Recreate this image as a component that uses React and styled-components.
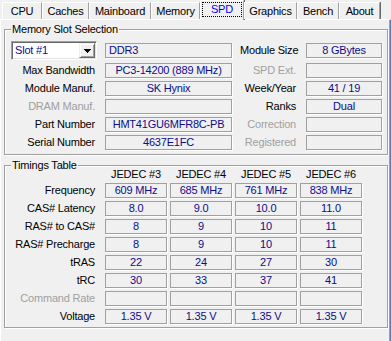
import React from 'react';
import styled, { createGlobalStyle } from 'styled-components';

const Global = createGlobalStyle`
  html, body { margin: 0; padding: 0; background: #f0f0f0; }
  body {
    font-family: "Liberation Sans", Arial, sans-serif;
    font-size: 11px;
    letter-spacing: -0.2px;
    color: #000;
    overflow: hidden;
  }
`;

const Window = styled.div`
  width: 391px;
  height: 341px;
  display: flex;
  flex-direction: column;
  background: #f0f0f0;
  overflow: hidden;
`;

const TabBar = styled.div`
  display: flex;
  align-items: flex-end;
  height: 19px;
  padding-left: 2px;
  position: relative;
  z-index: 1;
`;

const Tab = styled.div`
  box-sizing: border-box;
  width: ${p => p.$w}px;
  height: ${p => (p.$active ? 20 : 17)}px;
  margin-bottom: ${p => (p.$active ? -1 : 0)}px;
  display: flex;
  align-items: center;
  justify-content: center;
  background: #f0f0f0;
  border-left: 1px solid #fff;
  border-top: 1px solid #fff;
  border-right: 1px solid #a0a0a0;
  box-shadow: 1px 0 0 #696969;
  color: ${p => (p.$active ? '#0000ff' : '#000')};
  line-height: 13px;
`;

const Focus = styled.span`
  box-sizing: border-box;
  width: 40px;
  height: 15px;
  margin-bottom: 2px;
  display: flex;
  align-items: center;
  justify-content: center;
  border: 1px dotted #000;
`;

const Panel = styled.div`
  flex: 1;
  box-sizing: border-box;
  width: 391px;
  border-top: 1px solid #fff;
  border-left: 1px solid #fff;
  border-right: 1px solid #3a86d8;
  box-shadow: inset -1px 0 0 #a0a0a0;
  padding: 9px 0 0 3px;
  display: flex;
  flex-direction: column;
  gap: 10px;
`;

const Group = styled.div`
  position: relative;
  box-sizing: border-box;
  width: 384px;
  border: 1px solid #a0a0a0;
  box-shadow: inset 1px 1px 0 #fff, 1px 1px 0 #fff;
  padding: ${p => p.$pad};
`;

const Legend = styled.span`
  position: absolute;
  top: -7px;
  left: 6px;
  padding: 0 1px;
  background: #f0f0f0;
  line-height: 13px;
`;

const SlotGrid = styled.div`
  display: grid;
  grid-template-columns: 86px 127px 58px 76px;
  grid-template-rows: 19px repeat(5, 15px);
  column-gap: 8px;
  row-gap: 3px;
`;

const TimingGrid = styled.div`
  display: grid;
  grid-template-columns: 91px repeat(4, 62px);
  grid-template-rows: 12px repeat(8, 15px);
  column-gap: 3px;
  row-gap: 3px;
`;

const Label = styled.div`
  align-self: center;
  text-align: right;
  line-height: 13px;
  white-space: nowrap;
  padding-right: ${p => p.$pr || 2}px;
  color: ${p => (p.$dis ? '#a0a0a0' : '#000')};
`;

const Head = styled.div`
  text-align: center;
  line-height: 12px;
  white-space: nowrap;
`;

const Field = styled.div`
  box-sizing: border-box;
  height: 15px;
  align-self: center;
  border: 1px solid #a0a0a0;
  box-shadow: 1px 1px 0 #fff;
  color: #0c0c8c;
  line-height: 13px;
  white-space: nowrap;
  overflow: hidden;
  text-align: ${p => (p.$left ? 'left' : 'center')};
  padding-left: ${p => (p.$left ? 3 : 0)}px;
`;

const Combo = styled.div`
  box-sizing: border-box;
  height: 19px;
  padding: 1px;
  display: flex;
  align-items: center;
  justify-content: space-between;
  background: #fff;
  border: 1px solid;
  border-color: #a0a0a0 #fff #fff #a0a0a0;
  box-shadow: inset 1px 1px 0 #696969, inset -1px -1px 0 #e3e3e3;
  color: #0c0c8c;
`;

const ComboText = styled.span`
  padding-left: 2px;
  line-height: 13px;
`;

const ArrowBtn = styled.div`
  box-sizing: border-box;
  width: 16px;
  height: 15px;
  display: flex;
  align-items: center;
  justify-content: center;
  background: #f0f0f0;
  border: 1px solid;
  border-color: #f0f0f0 #696969 #696969 #f0f0f0;
  box-shadow: inset 1px 1px 0 #fff, inset -1px -1px 0 #a0a0a0;
`;

const tabs = [
  ['CPU', 40], ['Caches', 47], ['Mainboard', 62], ['Memory', 49],
  ['SPD', 44], ['Graphics', 53], ['Bench', 42], ['About', 41],
];

const slotRows = [
  ['Max Bandwidth', false, 'PC3-14200 (889 MHz)', 'SPD Ext.', true, ''],
  ['Module Manuf.', false, 'SK Hynix', 'Week/Year', false, '41 / 19'],
  ['DRAM Manuf.', true, '', 'Ranks', false, 'Dual'],
  ['Part Number', false, 'HMT41GU6MFR8C-PB', 'Correction', true, ''],
  ['Serial Number', false, '4637E1FC', 'Registered', true, ''],
];

const timings = [
  ['Frequency', false, ['609 MHz', '685 MHz', '761 MHz', '838 MHz']],
  ['CAS# Latency', false, ['8.0', '9.0', '10.0', '11.0']],
  ['RAS# to CAS#', false, ['8', '9', '10', '11']],
  ['RAS# Precharge', false, ['8', '9', '10', '11']],
  ['tRAS', false, ['22', '24', '27', '30']],
  ['tRC', false, ['30', '33', '37', '41']],
  ['Command Rate', true, ['', '', '', '']],
  ['Voltage', false, ['1.35 V', '1.35 V', '1.35 V', '1.35 V']],
];

export default function App() {
  return (
    <Window>
      <Global />
      <TabBar>
        {tabs.map(([name, w]) => (
          <Tab key={name} $w={w} $active={name === 'SPD'}>
            {name === 'SPD' ? <Focus>{name}</Focus> : name}
          </Tab>
        ))}
      </TabBar>
      <Panel>
        <Group $pad="11px 5px 4px 6px">
          <Legend>Memory Slot Selection</Legend>
          <SlotGrid>
            <Combo>
              <ComboText>Slot #1</ComboText>
              <ArrowBtn>
                <svg width="7" height="4" viewBox="0 0 7 4">
                  <path d="M0 0H7V1H6V2H5V3H4V4H3V3H2V2H1V1H0Z" fill="#000" />
                </svg>
              </ArrowBtn>
            </Combo>
            <Field $left>DDR3</Field>
            <Label>Module Size</Label>
            <Field>8 GBytes</Field>
            {slotRows.map(([l1, d1, v1, l2, d2, v2]) => (
              <React.Fragment key={l1}>
                <Label $dis={d1}>{l1}</Label>
                <Field>{v1}</Field>
                <Label $dis={d2}>{l2}</Label>
                <Field>{v2}</Field>
              </React.Fragment>
            ))}
          </SlotGrid>
        </Group>
        <Group $pad="2px 5px 3px 6px">
          <Legend>Timings Table</Legend>
          <TimingGrid>
            <div />
            <Head>JEDEC #3</Head>
            <Head>JEDEC #4</Head>
            <Head>JEDEC #5</Head>
            <Head>JEDEC #6</Head>
            {timings.map(([label, dis, vals]) => (
              <React.Fragment key={label}>
                <Label $dis={dis} $pr={7}>{label}</Label>
                {vals.map((v, i) => (
                  <Field key={i}>{v}</Field>
                ))}
              </React.Fragment>
            ))}
          </TimingGrid>
        </Group>
      </Panel>
    </Window>
  );
}
